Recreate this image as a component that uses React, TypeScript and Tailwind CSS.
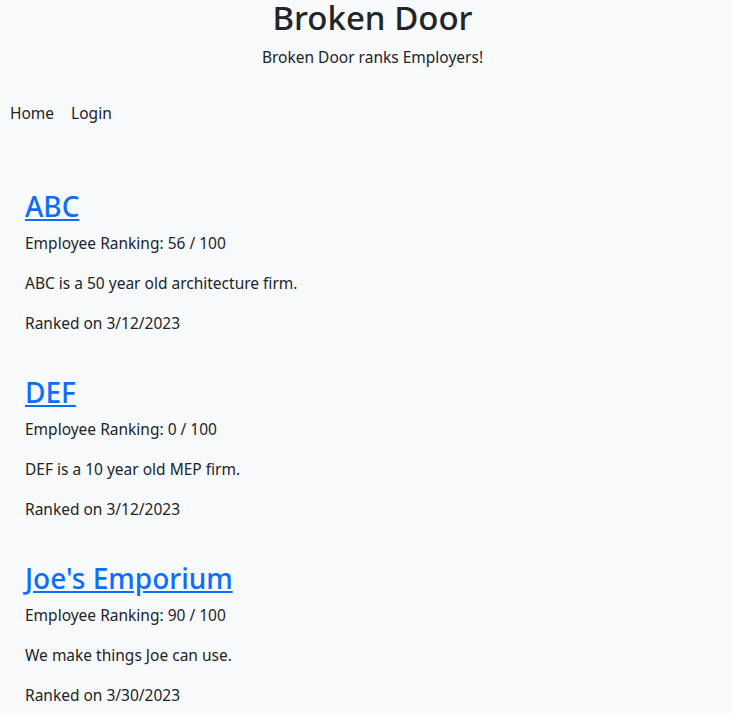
export default function App() {
  const items = [
    { name: "ABC", rank: 56, desc: "ABC is a 50 year old architecture firm.", date: "3/12/2023" },
    { name: "DEF", rank: 0, desc: "DEF is a 10 year old MEP firm.", date: "3/12/2023" },
    { name: "Joe's Emporium", rank: 90, desc: "We make things Joe can use.", date: "3/30/2023" },
  ];
  return (
    <div className="min-h-[713px] bg-[#f8f9fa] text-[#212529] text-[15.5px] leading-[24px]" style={{ fontFamily: '"Noto Sans", sans-serif' }}>
      <header className="text-center pl-[13px]">
        <h1 className="text-[33px] leading-[36px] font-medium pt-0 mb-[9px]">Broken Door</h1>
        <p className="mb-[32px]">Broken Door ranks Employers!</p>
      </header>
      <nav className="flex px-[10px] gap-[17px]">
        <a>Home</a>
        <a>Login</a>
      </nav>
      <main className="px-[25px] pt-[65px]">
        {items.map((it) => (
          <section key={it.name} className="mb-[41px]">
            <h2 className="text-[28px] leading-[33px] font-medium mb-[8px]">
              <a className="text-[#0d6efd] underline">{it.name}</a>
            </h2>
            <p className="mb-[16px]">Employee Ranking: {it.rank} / 100</p>
            <p className="mb-[16px]">{it.desc}</p>
            <p className="mb-[16px]">Ranked on {it.date}</p>
          </section>
        ))}
      </main>
    </div>
  );
}
